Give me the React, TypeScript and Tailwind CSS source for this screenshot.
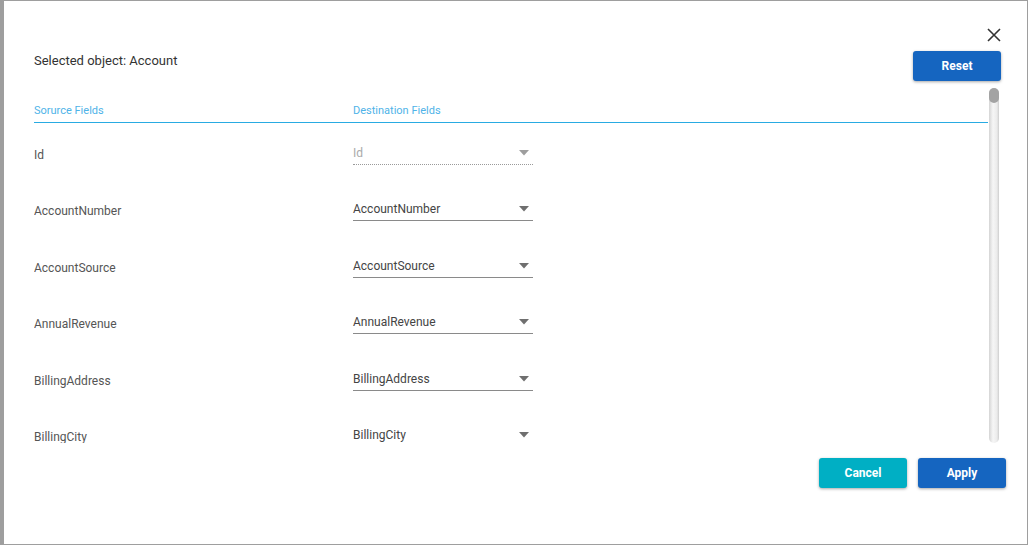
const fields = ["Id", "AccountNumber", "AccountSource", "AnnualRevenue", "BillingAddress", "BillingCity"];

function Dropdown({ value, disabled }: { value: string; disabled?: boolean }) {
  return (
    <div
      className={`mt-[22px] flex w-[180px] items-center justify-between pb-[3px] ${
        disabled ? "border-b border-dotted border-[#9a9a9a] text-[#aaaaaa]" : "border-b border-[#8a8a8a] text-[#444]"
      }`}
    >
      <span className="text-[12px] leading-[16px]">{value}</span>
      <svg width="10" height="6" viewBox="0 0 10 6" className="mr-[4px]">
        <path d="M0 0h10L5 5.5z" fill={disabled ? "#9e9e9e" : "#6f6f6f"} />
      </svg>
    </div>
  );
}

export default function App() {
  return (
    <div
      className="h-[545px] w-[1028px] bg-[#9e9e9e] pb-px pl-[4px] pr-px pt-px"
      style={{ fontFamily: "Roboto, 'Noto Sans', sans-serif" }}
    >
      <div className="relative flex h-full flex-col bg-white">
        {/* Close */}
        <button className="absolute right-[26px] top-[27px] text-[#333]">
          <svg width="14" height="14" viewBox="0 0 14 14">
            <path d="M1 1l12 12M13 1L1 13" stroke="currentColor" strokeWidth="1.6" />
          </svg>
        </button>

        {/* Header */}
        <div className="flex items-start justify-between pl-[30px] pr-[26px] pt-[50px]">
          <h2 className="pt-px text-[13px] leading-[18px] text-[#333]">Selected object: Account</h2>
          <button className="h-[30px] w-[88px] rounded-[3px] bg-[#1565c0] text-[12px] font-bold text-white shadow-[0_1px_3px_rgba(0,0,0,0.35)]">
            Reset
          </button>
        </div>

        {/* Mapping list with its scrollbar */}
        <div className="ml-[30px] mr-[28px] mt-[7px] flex h-[355px]">
          <div className="flex-1 overflow-hidden pr-px">
            <div className="flex border-b border-[#29abe2] pb-[5px] pt-[17px] text-[11px] leading-[12px] text-[#4fb3e8]">
              <div className="w-[319px]">Sorurce Fields</div>
              <div>Destination Fields</div>
            </div>
            {fields.map((f, i) => (
              <div key={f} className="flex h-[56.4px] items-start">
                <div className="mt-[24px] w-[319px] text-[12px] leading-[16px] text-[#555]">{f}</div>
                <Dropdown value={f} disabled={i === 0} />
              </div>
            ))}
          </div>
          <div className="w-[10px] rounded-[6px] bg-[linear-gradient(to_right,#d4d4d4,#f6f6f6_40%,#ebebeb_80%,#cdcdcd)]">
            <div className="h-[15px] rounded-[6px] bg-[#a3a3a3]" />
          </div>
        </div>

        {/* Footer */}
        <div className="flex justify-end gap-[11px] pr-[21px] pt-[15px]">
          <button className="h-[30px] w-[88px] rounded-[3px] bg-[#00afc4] text-[12px] font-bold text-white shadow-[0_1px_3px_rgba(0,0,0,0.35)]">
            Cancel
          </button>
          <button className="h-[30px] w-[88px] rounded-[3px] bg-[#1565c0] text-[12px] font-bold text-white shadow-[0_1px_3px_rgba(0,0,0,0.35)]">
            Apply
          </button>
        </div>
      </div>
    </div>
  );
}
